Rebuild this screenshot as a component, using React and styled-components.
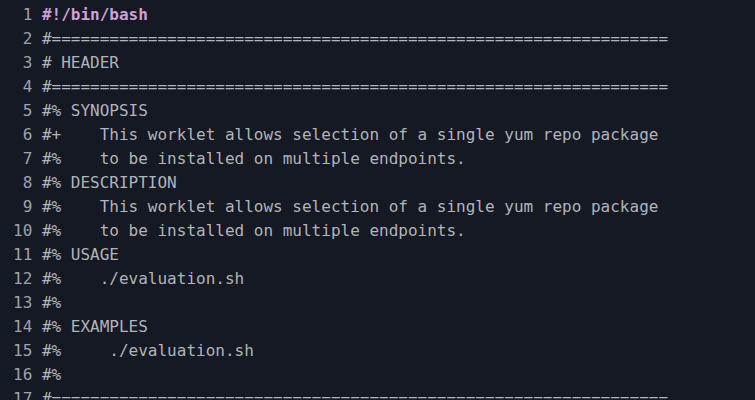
import styled, { createGlobalStyle } from "styled-components";

const GlobalStyle = createGlobalStyle`
  html, body {
    margin: 0;
    padding: 0;
    background: #141923;
  }
`;

const lines = [
  { text: "#!/bin/bash", shebang: true },
  { text: "#" + "=".repeat(64) },
  { text: "# HEADER" },
  { text: "#" + "=".repeat(64) },
  { text: "#% SYNOPSIS" },
  { text: "#+    This worklet allows selection of a single yum repo package" },
  { text: "#%    to be installed on multiple endpoints." },
  { text: "#% DESCRIPTION" },
  { text: "#%    This worklet allows selection of a single yum repo package" },
  { text: "#%    to be installed on multiple endpoints." },
  { text: "#% USAGE" },
  { text: "#%    ./evaluation.sh" },
  { text: "#%" },
  { text: "#% EXAMPLES" },
  { text: "#%     ./evaluation.sh" },
  { text: "#%" },
  { text: "#" + "=".repeat(64) },
];

let Editor = styled.div`
  width: 755px;
  height: 400px;
  overflow: hidden;
  background: #141923;
  padding-top: 3px;
  box-sizing: border-box;
  font-family: "DejaVu Sans Mono", "Liberation Mono", monospace;
  font-size: 16px;
  line-height: 24px;
`;

let Line = styled.div`
  display: grid;
  grid-template-columns: 2ch 1fr;
  column-gap: 1ch;
  padding-left: 13px;
  white-space: pre;
`;

let Number = styled.span`
  text-align: right;
  color: #9ea2a9;
`;

let Code = styled.span`
  color: ${(props) => (props.$shebang ? "#d09fd8" : "#b1b4ba")};
  font-weight: ${(props) => (props.$shebang ? 700 : 400)};
`;

export default function App() {
  return (
    <>
      <GlobalStyle />
      <Editor>
        {lines.map((line, i) => (
          <Line key={i}>
            <Number>{i + 1}</Number>
            <Code $shebang={line.shebang}>{line.text}</Code>
          </Line>
        ))}
      </Editor>
    </>
  );
}
